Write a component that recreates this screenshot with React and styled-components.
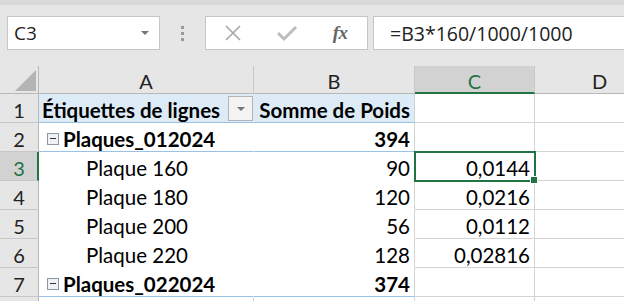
import React from "react";
import styled, { createGlobalStyle } from "styled-components";

const GlobalStyle = createGlobalStyle`
  html, body { margin: 0; padding: 0; background: #e6e6e6; overflow: hidden; }
  * { box-sizing: border-box; }
`;

const Page = styled.div`
  width: 624px;
  height: 301px;
  overflow: hidden;
  background: #ffffff;
`;

const Toolbar = styled.div`
  height: 66px;
  background: #e6e6e6;
  border-top: 5px solid #d9d9d9;
  display: flex;
  align-items: flex-start;
  padding: 11px 0 0 7px;
  font-family: "Open Sans", "Noto Sans", sans-serif;
`;

const NameBox = styled.div`
  width: 153px;
  height: 34px;
  background: #fff;
  border: 1px solid #c6c6c6;
  display: flex;
  align-items: center;
  justify-content: space-between;
  padding: 0 10px 0 6px;
  font-size: 19px;
  color: #222;
`;

const Caret = styled.span`
  width: 0;
  height: 0;
  border-left: 4px solid transparent;
  border-right: 4px solid transparent;
  border-top: 4px solid #777;
`;

const Grip = styled.div`
  width: 45px;
  height: 34px;
  display: flex;
  flex-direction: column;
  align-items: center;
  justify-content: center;
  gap: 3px;
`;

const Dot = styled.span`
  width: 3px;
  height: 3px;
  background: #9a9a9a;
`;

const FxGroup = styled.div`
  width: 163px;
  height: 34px;
  background: #fff;
  border: 1px solid #c6c6c6;
  display: flex;
`;

const FxButton = styled.div`
  flex: 1;
  display: flex;
  align-items: center;
  justify-content: center;
`;

const FxLabel = styled.span`
  font-family: "Liberation Serif", "DejaVu Serif", serif;
  font-style: italic;
  font-weight: 700;
  font-size: 19px;
  color: #666;
  letter-spacing: -0.5px;
`;

const FormulaBar = styled.div`
  flex: 1;
  margin-left: 5px;
  height: 34px;
  background: #fff;
  border: 1px solid #c6c6c6;
  border-right: none;
  display: flex;
  align-items: center;
  padding-left: 16px;
  font-size: 19.5px;
  color: #222;
  white-space: nowrap;
`;

const Grid = styled.div`
  display: grid;
  grid-template-columns: 39px 215px 161px 120px 130px;
  grid-template-rows: 28px;
  grid-auto-rows: 29px;
  font-family: "Lato", "Open Sans", sans-serif;
  position: relative;
`;

const Corner = styled.div`
  background: #e6e6e6;
  border-right: 1px solid #b8b8b8;
  border-bottom: 1px solid #b8b8b8;
  position: relative;
`;

const ColHead = styled.div`
  background: ${(p) => (p.$active ? "#d2d2d2" : "#e6e6e6")};
  border-right: 1px solid #c8c8c8;
  border-bottom: ${(p) => (p.$active ? "2px solid #217346" : "1px solid #b8b8b8")};
  display: flex;
  align-items: center;
  justify-content: center;
  padding-top: ${(p) => (p.$active ? "3px" : "2px")};
  font-size: 20px;
  color: ${(p) => (p.$active ? "#217346" : "#222")};
`;

const RowHead = styled.div`
  background: ${(p) => (p.$active ? "#d2d2d2" : "#e6e6e6")};
  border-bottom: 1px solid #c8c8c8;
  border-right: ${(p) => (p.$active ? "2px solid #217346" : "1px solid #b8b8b8")};
  display: flex;
  align-items: center;
  justify-content: center;
  padding-top: 3px;
  padding-left: ${(p) => (p.$active ? "1px" : "0")};
  font-size: 20px;
  color: ${(p) => (p.$active ? "#217346" : "#222")};
`;

const Cell = styled.div`
  background: ${(p) => p.$bg || "#fff"};
  border-right: 1px solid ${(p) => p.$rightColor || "#d4d4d4"};
  border-bottom: 1px solid ${(p) => p.$bottomColor || "#d4d4d4"};
  display: flex;
  align-items: center;
  justify-content: ${(p) => (p.$right ? "flex-end" : "flex-start")};
  padding: 3px 4px 0 ${(p) => p.$indent ?? 3}px;
  font-size: 20.5px;
  font-weight: ${(p) => (p.$bold ? 700 : 400)};
  color: #000;
  white-space: nowrap;
  overflow: hidden;
  position: relative;
`;

const CellText = styled.span`
  flex: 1;
`;

const FilterButton = styled.span`
  width: 25px;
  height: 25px;
  margin-right: -4px;
  margin-top: -2px;
  flex-shrink: 0;
  background: #f3f3f3;
  border: 1px solid #b4b4b4;
  display: flex;
  align-items: center;
  justify-content: center;
  &::after {
    content: "";
    border-left: 4px solid transparent;
    border-right: 4px solid transparent;
    border-top: 4px solid #777;
  }
`;

const Collapse = styled.span`
  width: 12px;
  height: 12px;
  margin-right: 4px;
  flex-shrink: 0;
  border: 1px solid #8a98a8;
  background: #eef1f5;
  display: inline-flex;
  align-items: center;
  justify-content: center;
  &::after {
    content: "";
    width: 6px;
    height: 1px;
    background: #333;
  }
`;

const Selection = styled.div`
  position: absolute;
  left: 414px;
  top: 85px;
  width: 122px;
  height: 31px;
  border: 2px solid #217346;
  pointer-events: none;
  &::after {
    content: "";
    position: absolute;
    right: -4px;
    bottom: -4px;
    width: 6px;
    height: 6px;
    background: #217346;
    border: 1px solid #fff;
  }
`;

const PIVOT_LINE = "#9bc2e6";

const rows = [
  { n: 1, kind: "header" },
  { n: 2, kind: "group", label: "Plaques_012024", b: "394" },
  { n: 3, kind: "item", label: "Plaque 160", b: "90", c: "0,0144" },
  { n: 4, kind: "item", label: "Plaque 180", b: "120", c: "0,0216" },
  { n: 5, kind: "item", label: "Plaque 200", b: "56", c: "0,0112" },
  { n: 6, kind: "item", label: "Plaque 220", b: "128", c: "0,02816" },
  { n: 7, kind: "group", label: "Plaques_022024", b: "374" },
  { n: 8, kind: "empty" },
];

function XIcon() {
  return (
    <svg width="20" height="20" viewBox="0 0 20 20">
      <path d="M3 3 L17 17 M17 3 L3 17" stroke="#a6a6a6" strokeWidth="1.6" fill="none" />
    </svg>
  );
}

function CheckIcon() {
  return (
    <svg width="22" height="20" viewBox="0 0 22 20">
      <path d="M2 10 L8 16 L20 4" stroke="#bdbdbd" strokeWidth="3" fill="none" />
    </svg>
  );
}

function CornerTriangle() {
  return (
    <svg width="39" height="28" viewBox="0 0 39 28" style={{ position: "absolute", left: 0, top: 0 }}>
      <polygon points="15,25 36,25 36,4" fill="#b4b4b4" />
    </svg>
  );
}

function PivotRow({ r }) {
  if (r.kind === "header") {
    return (
      <>
        <Cell $bg="#ddebf7" $bold $rightColor="#ddebf7" $bottomColor={PIVOT_LINE}>
          <CellText>Étiquettes de lignes</CellText>
          <FilterButton />
        </Cell>
        <Cell $bg="#ddebf7" $bold $right $bottomColor={PIVOT_LINE}>
          Somme de Poids
        </Cell>
        <Cell />
        <Cell />
      </>
    );
  }
  if (r.kind === "group") {
    return (
      <>
        <Cell $bold $indent={8} $rightColor="#fff" $bottomColor={PIVOT_LINE}>
          <Collapse />
          {r.label}
        </Cell>
        <Cell $bold $right $bottomColor={PIVOT_LINE}>
          {r.b}
        </Cell>
        <Cell />
        <Cell />
      </>
    );
  }
  if (r.kind === "item") {
    return (
      <>
        <Cell $indent={47} $rightColor="#fff" $bottomColor="#fff">
          {r.label}
        </Cell>
        <Cell $right $bottomColor="#fff">
          {r.b}
        </Cell>
        <Cell $right>{r.c}</Cell>
        <Cell />
      </>
    );
  }
  return (
    <>
      <Cell />
      <Cell />
      <Cell />
      <Cell />
    </>
  );
}

export default function App() {
  return (
    <Page>
      <GlobalStyle />
      <Toolbar>
        <NameBox>
          C3
          <Caret />
        </NameBox>
        <Grip>
          <Dot />
          <Dot />
          <Dot />
        </Grip>
        <FxGroup>
          <FxButton>
            <XIcon />
          </FxButton>
          <FxButton>
            <CheckIcon />
          </FxButton>
          <FxButton>
            <FxLabel>fx</FxLabel>
          </FxButton>
        </FxGroup>
        <FormulaBar>=B3*160/1000/1000</FormulaBar>
      </Toolbar>
      <Grid>
        <Corner>
          <CornerTriangle />
        </Corner>
        <ColHead>A</ColHead>
        <ColHead>B</ColHead>
        <ColHead $active>C</ColHead>
        <ColHead>D</ColHead>
        {rows.map((r) => (
          <React.Fragment key={r.n}>
            <RowHead $active={r.n === 3}>{r.kind === "empty" ? "" : r.n}</RowHead>
            <PivotRow r={r} />
          </React.Fragment>
        ))}
        <Selection />
      </Grid>
    </Page>
  );
}
